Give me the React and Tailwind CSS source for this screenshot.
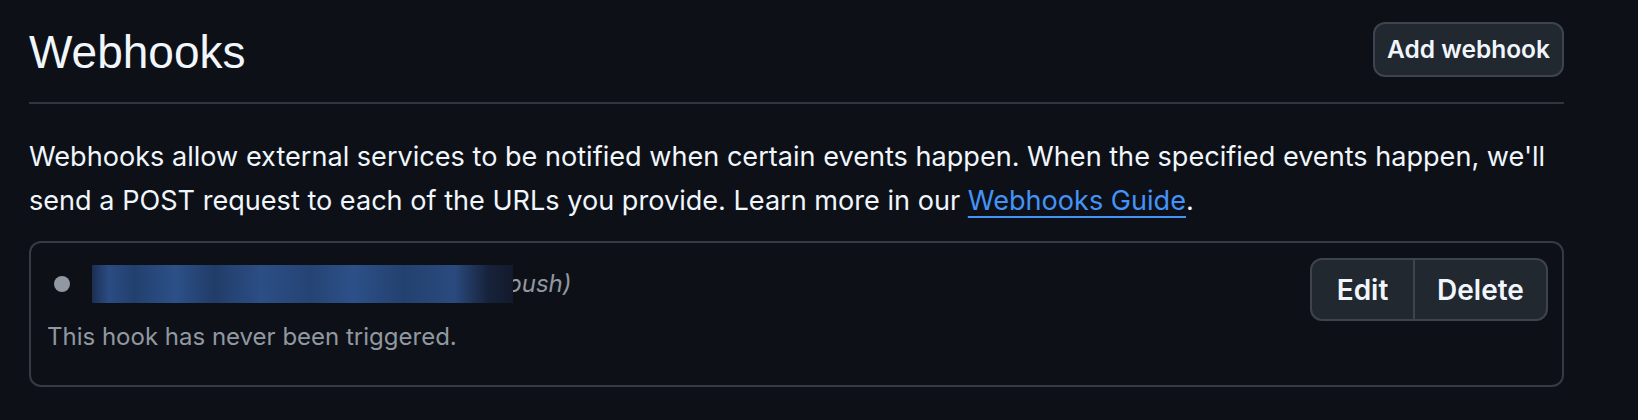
import React from 'react';

const WebhookRow = () => {
    return (
        <div className="flex items-start justify-between rounded-[12px] border-2 border-[#353b44] pl-[16px] pr-[14px] pt-[15px] pb-[30px]">
            <div className="flex flex-col">
                {/* Hook url (blurred) */}
                <div className="mt-[7px] flex h-[38px] items-center">
                    <span className="ml-[7px] h-[16px] w-[16px] rounded-full bg-[#9198a1]" />
                    <span className="relative z-10 ml-[22px] h-[38px] w-[421px] bg-[linear-gradient(90deg,#1c2f52_0%,#2a4c82_4%,#22406e_10%,#2c5088_20%,#213c68_29%,#2b4e85_40%,#254474_52%,#2c5088_62%,#23416f_74%,#2a4a7e_86%,#17233c_94%,#131a2b_100%)]" />
                    <span className="-ml-[6px] text-[24px] italic text-[#9198a1]">push)</span>
                </div>
                <p className="mt-[16px] text-[24px] leading-[36px] text-[#9198a1]">
                    This hook has never been triggered.
                </p>
            </div>
            <div className="flex h-[63px] overflow-hidden rounded-[12px] border-2 border-[#3d444d] bg-[#212830] text-[28px] font-semibold text-[#f0f6fc]">
                <button className="flex w-[101px] items-center justify-center">Edit</button>
                <button className="flex w-[133px] items-center justify-center border-l-2 border-[#3d444d]">Delete</button>
            </div>
        </div>
    );
};

export default function App() {
    return (
        <div className="min-h-[420px] w-full bg-[#0d1117] font-['Inter','Liberation_Sans',sans-serif] text-[#f0f6fc]">
            <div className="w-[1564px] pl-[29px]">
                {/* Header */}
                <div className="flex items-start justify-between border-b-2 border-[#30363d] pt-[22px] pb-[22px]">
                    <h1 className="mt-[2px] font-['Liberation_Sans',Arial,sans-serif] text-[46px] font-normal leading-[56px]">Webhooks</h1>
                    <button className="flex h-[55px] w-[191px] items-center justify-center rounded-[12px] border-2 border-[#3d444d] bg-[#212830] text-[24.5px] font-semibold">
                        Add webhook
                    </button>
                </div>

                {/* Description */}
                <p className="mt-[31px] text-[27.1px] leading-[43.5px]">
                    Webhooks allow external services to be notified when certain events happen. When the specified events happen, we'll
                    <br />
                    send a POST request to each of the URLs you provide. Learn more in our{' '}
                    <a href="#" className="text-[#4493f8] underline decoration-2 underline-offset-[6px]">Webhooks Guide</a>.
                </p>

                <div className="mt-[19px]">
                    <WebhookRow />
                </div>
            </div>
        </div>
    );
}
